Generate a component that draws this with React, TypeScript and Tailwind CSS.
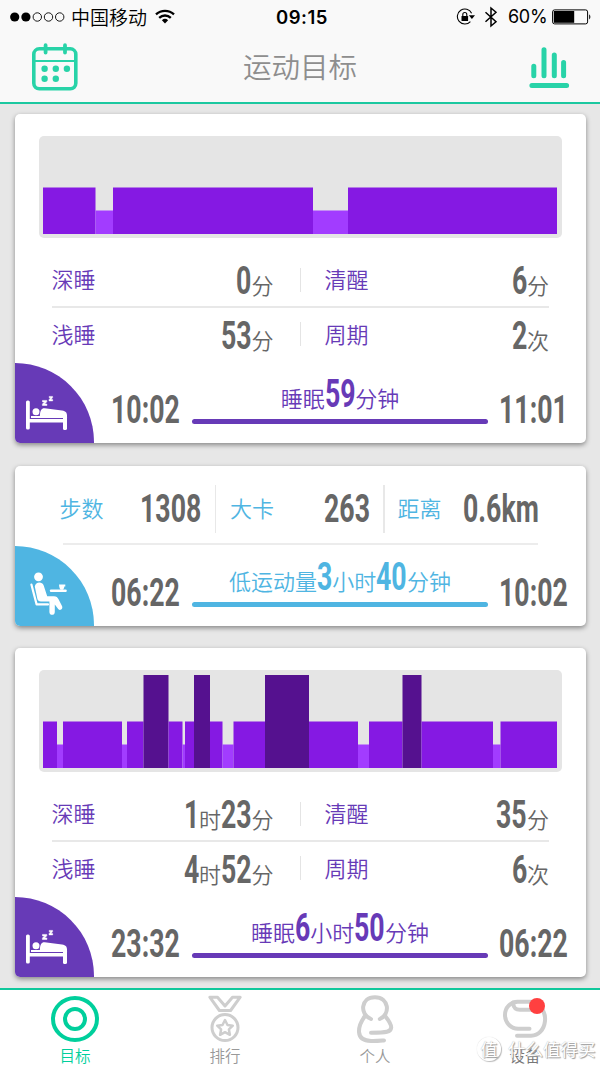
import type { ReactNode } from 'react';

type Level = 'light' | 'mid' | 'deep';
type Segment = [end: number, level: Level];

const LEVELS: Record<Level, { h: number; fill: string }> = {
  light: { h: 23.5, fill: '#a23cff' },
  mid: { h: 46.5, fill: '#8519e3' },
  deep: { h: 93, fill: '#55118f' },
};

const NAP: Segment[] = [[52.5, 'mid'], [70, 'light'], [270, 'mid'], [305, 'light'], [514, 'mid']];

const NIGHT: Segment[] = [
  [14, 'mid'], [20, 'light'], [79, 'mid'], [84, 'light'], [100.5, 'mid'], [125.5, 'deep'],
  [139.5, 'mid'], [142, 'light'], [151, 'mid'], [167, 'deep'], [179.5, 'mid'], [190.5, 'light'],
  [222, 'mid'], [266, 'deep'], [315, 'mid'], [326, 'light'], [359.5, 'mid'], [378.5, 'deep'],
  [450, 'mid'], [457.5, 'light'], [514, 'mid'],
];

const ADVANCE: Record<string, number> = { ':': 7.8, '.': 7.8, k: 14.5, m: 23.2 };

/* Condensed numerals: the glyphs are squeezed and the box takes the squeezed width. */
function Num({ children }: { children: string }) {
  const width = [...children].reduce((sum, c) => sum + (ADVANCE[c] ?? 15.3), 0);
  return (
    <span className="inline-block whitespace-nowrap" style={{ width }}>
      <span className="inline-block origin-left scale-x-[0.685] font-[Roboto,sans-serif] text-[39px] leading-[40px] font-bold">
        {children}
      </span>
    </span>
  );
}

function SleepChart({ segments }: { segments: Segment[] }) {
  return (
    <div className="mx-6 h-[102px] rounded-[5px] bg-[#e5e5e5] pt-[5px] pl-[4.5px]">
      <svg width="514" height="93" viewBox="0 0 514 93" className="block">
        {segments.map(([end, level], i) => {
          const start = i === 0 ? 0 : segments[i - 1][0];
          const { h, fill } = LEVELS[level];
          return <rect key={end} x={start} y={93 - h} width={end - start} height={h} fill={fill} />;
        })}
      </svg>
    </div>
  );
}

function Metric({ label, children }: { label: string; children: ReactNode }) {
  return (
    <div className="flex flex-1 items-center justify-between">
      <span className="pb-[3px] text-[22px] leading-[24px] font-[350] text-[#673ab7]">{label}</span>
      <span className="flex items-baseline pt-[3px] text-[22px] leading-[24px] font-[350] text-[#666]">{children}</span>
    </div>
  );
}

function MetricRow({ left, right }: { left: ReactNode; right: ReactNode }) {
  return (
    <div className="flex h-[53px] items-center">
      <div className="flex w-[222px]">{left}</div>
      <div className="mr-[24px] ml-[26px] h-6 w-px bg-[#e4e4e4]" />
      <div className="flex flex-1">{right}</div>
    </div>
  );
}

function BedIcon() {
  return (
    <svg width="42" height="36" viewBox="0 0 42 36" fill="#fff" className="block">
      <rect x="0" y="5.5" width="3.8" height="29" rx="1.6" />
      <rect x="2" y="24" width="39" height="3.6" rx="1" />
      <rect x="37" y="21" width="4" height="14" rx="1.6" />
      <path d="M5 21H41V23H5Z" />
      <circle cx="10" cy="16.7" r="3.5" />
      <path d="M13.8 20.5C14.2 15 15.6 13 18.6 13.2L36 15.4C40 16 41 17.6 41 21H14Z" />
      <path
        d="M16.5 5.4H20.8V6.8L18.7 9H20.9V10.5H16.4V9.1L18.5 6.9H16.5ZM23.2 1.4H26.6V2.6L25 4.6H26.7V5.9H23V4.7L24.7 2.7H23.2Z"
        stroke="#fff"
        strokeWidth="0.5"
      />
    </svg>
  );
}

function SittingIcon() {
  return (
    <svg width="38" height="44" viewBox="0 0 38 44" fill="#fff" className="block">
      <circle cx="8.5" cy="4.8" r="4.4" />
      <path d="M4.8 14.5C5.5 9.8 12 9.2 13.7 13.5L17.2 24.2H24C26.4 24.2 27.6 25.5 28.4 27L32 34C33.4 37 30 39.2 28.2 37L24.8 32.5V40C24.8 43.8 19.4 43.8 19.4 40V29.5H11C8.8 29.5 7.8 28.4 7.4 27Z" />
      <path d="M1.4 12.5L6.6 32.4H18" fill="none" stroke="#fff" strokeWidth="2.2" strokeLinecap="round" strokeLinejoin="round" />
      <rect x="19.8" y="17.6" width="17" height="2.4" rx="1.2" />
      <path d="M29 12.6H35.3V14.6H34.3C34.2 16 33.8 17 33 17.8H30.6C29.5 16.5 29.2 15 29 12.6Z" />
    </svg>
  );
}

type TimelineProps = {
  start: string;
  end: string;
  icon: ReactNode;
  iconPad: string;
  badge: string;
  text: string;
  bar: string;
  children: ReactNode;
};

function Timeline({ start, end, icon, iconPad, badge, text, bar, children }: TimelineProps) {
  return (
    <div className="flex h-[80px] text-[#666]">
      <div className={`h-[80px] w-[79.5px] shrink-0 overflow-hidden rounded-tr-full rounded-bl-[4px] ${iconPad} ${badge}`}>{icon}</div>
      <div className="w-[98px] pt-[27px] pl-[17px]"><Num>{start}</Num></div>
      <div className="w-[296px]">
        <div className={`flex h-[56px] items-baseline justify-center pt-[11px] text-[22px] leading-[24px] font-[350] ${text}`}>{children}</div>
        <div className={`h-[5px] rounded-full ${bar}`} />
      </div>
      <div className="pt-[27px] pl-[10.5px]"><Num>{end}</Num></div>
    </div>
  );
}

function Card({ children }: { children: ReactNode }) {
  return (
    <section className="flex flex-col overflow-hidden rounded-[5px] bg-white shadow-[0_2px_5px_rgba(0,0,0,0.42)]">
      {children}
    </section>
  );
}

type SleepCardProps = {
  segments: Segment[];
  deep: ReactNode;
  awake: ReactNode;
  light: ReactNode;
  cycles: ReactNode;
  start: string;
  end: string;
  total: ReactNode;
};

function SleepCard({ segments, deep, awake, light, cycles, start, end, total }: SleepCardProps) {
  return (
    <Card>
      <div className="h-[249px] pt-[22px]">
        <SleepChart segments={segments} />
        <div className="mx-[37px] pt-[15px]">
          <MetricRow left={<Metric label="深睡">{deep}</Metric>} right={<Metric label="清醒">{awake}</Metric>} />
          <div className="h-[1.5px] bg-[#e8e8e8]" />
          <MetricRow left={<Metric label="浅睡">{light}</Metric>} right={<Metric label="周期">{cycles}</Metric>} />
        </div>
      </div>
      <Timeline
        start={start}
        end={end}
        icon={<BedIcon />}
        iconPad="pt-[32px] pl-[11.5px]"
        badge="bg-[#673ab7]"
        text="text-[#673ab7]"
        bar="bg-[#673ab7]"
      >
        {total}
      </Timeline>
    </Card>
  );
}

function StatusBar() {
  return (
    <div className="flex h-[33px] items-center text-[18px] leading-8 text-black">
      <svg width="56" height="12" viewBox="0 0 56 12" className="ml-[9px]">
        <circle cx="5.7" cy="6" r="4.6" />
        <circle cx="16.9" cy="6" r="4.6" />
        <g fill="none" stroke="#000" strokeWidth="0.9">
          <circle cx="28.3" cy="6" r="4.2" />
          <circle cx="39.5" cy="6" r="4.2" />
          <circle cx="50.7" cy="6" r="4.2" />
        </g>
      </svg>
      <span className="ml-[6px] w-[76px] text-[19px] font-[350]">中国移动</span>
      <svg width="20" height="15" viewBox="0 0 20 15" className="ml-[8px]" fill="none" stroke="#000" strokeWidth="2.3">
        <path d="M1 5.4A13 13 0 0 1 19 5.4" />
        <path d="M4.2 8.8A8.4 8.4 0 0 1 15.8 8.8" />
        <path d="M6.9 11.2A4.6 4.6 0 0 1 13.1 11.2L10 14.5Z" fill="#000" stroke="none" />
      </svg>
      <span className="ml-[101px] w-[54px] pt-px font-[Inter,sans-serif] text-[18.5px] font-semibold tracking-[0.5px]">09:15</span>
      <svg width="20" height="18" viewBox="0 0 20 18" className="ml-[126px]">
        <path d="M15.6 5.2A7.5 7.5 0 1 0 14.4 13.6" fill="none" stroke="#000" strokeWidth="1.1" />
        <path d="M12.8 7.2H19L15.9 11Z" />
        <rect x="5.5" y="8" width="6.6" height="5" rx="0.5" />
        <path d="M6.8 8V6.5A2 2 0 0 1 10.8 6.5V8" fill="none" stroke="#000" strokeWidth="1.1" />
      </svg>
      <svg width="14" height="22" viewBox="0 0 14 22" className="ml-[8px]" fill="none" stroke="#000" strokeWidth="1.5">
        <path d="M1.5 6.2L12 15.8L7 20V2L12 6.2L1.5 15.8" />
      </svg>
      <span className="ml-[10px] w-[40px] pt-px font-[Inter,sans-serif] text-[18px] tracking-[-0.3px]">60%</span>
      <svg width="40" height="16" viewBox="0 0 40 16" className="ml-[4px]">
        <rect x="0.6" y="0.9" width="35" height="14" rx="2" fill="none" stroke="#000" strokeWidth="1" />
        <rect x="1.8" y="2" width="20.4" height="11.8" />
        <path d="M37.2 5.2Q39.6 7.9 37.2 10.6Z" />
      </svg>
    </div>
  );
}

function Header() {
  return (
    <header className="h-[104px] border-b-2 border-[#1cc8a0] bg-[#f9f9f9]">
      <StatusBar />
      <div className="flex h-[69px] items-start justify-between pr-[29px] pl-[31px]">
        <svg width="48" height="50" viewBox="0 0 48 50" className="mt-[9px]" fill="none" stroke="#28d3a8" strokeLinecap="round">
          <rect x="2.8" y="6.8" width="42" height="40" rx="5.5" strokeWidth="3.6" />
          <path d="M3 19H45" strokeWidth="2.2" />
          <path d="M14.6 3.2V10.6M34 3.2V10.6" strokeWidth="3.8" />
          <g fill="#28d3a8" stroke="none">
            <circle cx="13.6" cy="26.7" r="3.2" />
            <circle cx="24.8" cy="26.7" r="3.2" />
            <circle cx="35.9" cy="26.7" r="3.2" />
            <circle cx="13.6" cy="36.8" r="3.2" />
            <circle cx="24.8" cy="36.8" r="3.2" />
          </g>
        </svg>
        <h1 className="mt-[13px] -ml-2 text-[28.5px] leading-[40px] font-[350] text-[#8e8e8e]">运动目标</h1>
        <svg width="42" height="44" viewBox="0 0 42 44" className="mt-[13px]" fill="none" stroke="#28d3a8" strokeWidth="5" strokeLinecap="round">
          <path d="M4.8 20.3V29.8M15 3.8V29.8M25.3 9V29.8M34.6 16.5V29.8M2.9 39.6H37.6" />
        </svg>
      </div>
    </header>
  );
}

function Stat({ label, value, className }: { label: string; value: string; className: string }) {
  return (
    <div className={`flex items-center justify-between ${className}`}>
      <span className="pb-[4px] text-[22px] leading-[24px] font-[350] text-[#4fb5e2]">{label}</span>
      <span className="text-[#666]"><Num>{value}</Num></span>
    </div>
  );
}

function ActivityCard() {
  return (
    <Card>
      <div className="h-[80px] pt-[19px]">
        <div className="flex h-[48px] pl-[45px]">
          <Stat label="步数" value="1308" className="w-[142px]" />
          <div className="ml-[13px] w-[1.5px] bg-[#e8e8e8]" />
          <Stat label="大卡" value="263" className="ml-[14px] w-[140px]" />
          <div className="ml-[13px] w-[1.5px] bg-[#e8e8e8]" />
          <Stat label="距离" value="0.6km" className="ml-[13px] w-[142px]" />
        </div>
        <div className="mx-[48px] mt-[10.5px] h-[2px] bg-[#ececec]" />
      </div>
      <Timeline
        start="06:22"
        end="10:02"
        icon={<SittingIcon />}
        iconPad="pt-[26px] pl-[15px]"
        badge="bg-[#4fb5e2]"
        text="text-[#4fb5e2]"
        bar="bg-[#4fb5e2]"
      >
        低运动量<Num>3</Num>小时<Num>40</Num>分钟
      </Timeline>
    </Card>
  );
}

function Tab({ label, color, children }: { label: string; color: string; children: ReactNode }) {
  return (
    <div className={`flex w-[150px] flex-col items-center pt-[3px] ${color}`}>
      <div className="flex h-[52px] items-center">{children}</div>
      <span className="text-[15.5px] leading-[20px] font-[350]">{label}</span>
    </div>
  );
}

function TabBar() {
  return (
    <nav className="flex h-[79px] border-t-2 border-[#10c89c] bg-white">
      <Tab label="目标" color="text-[#00cf9c]">
        <svg width="50" height="50" viewBox="0 0 50 50" fill="none" stroke="#00cf9c" strokeWidth="4">
          <ellipse cx="25" cy="25" rx="22" ry="21" />
          <circle cx="25" cy="25" r="10" />
        </svg>
      </Tab>
      <Tab label="排行" color="text-[#999]">
        <svg width="36" height="50" viewBox="0 0 36 50" fill="none" stroke="#cecece" strokeWidth="3" strokeLinejoin="round">
          <path d="M2.8 3.2H10.5L18 12L25.5 3.2H33.2L23.6 16.5H12.4Z" />
          <circle cx="18" cy="33.6" r="13" />
          <path d="M18 26L20.5 31L25.8 31.7L21.9 35.4L22.9 40.8L18 38.2L13.1 40.8L14.1 35.4L10.2 31.7L15.5 31Z" strokeWidth="2.5" />
        </svg>
      </Tab>
      <Tab label="个人" color="text-[#999]">
        <svg width="38" height="50" viewBox="0 0 38 50" fill="none" stroke="#cecece" strokeWidth="4" strokeLinecap="round">
          <path d="M15 25C3.4 20.5 4.5 3.2 18.9 3.2C33.3 3.2 34.6 20.5 23.8 25" />
          <path d="M9 22C3.8 29 2.8 34 3 38C3.5 44.5 9 46.8 15 47C20 47.2 23.5 46.8 28 46.4" />
          <path d="M29.5 22.5C33.5 27.5 35.3 30.5 35.2 33.5C34.8 38 31 38.7 15 38.7" />
        </svg>
      </Tab>
      <Tab label="设备" color="text-[#777]">
        <div className="relative">
          <svg width="46" height="50" viewBox="0 0 46 50" fill="none" stroke="#cecece" strokeWidth="4" strokeLinecap="round">
            <path d="M27.5 34.8H16C8 34.3 3 28 3 21C3 13.5 8.5 8 15.5 7.8H34" />
            <path d="M11 8.5C11.5 13.5 13 15.8 18 15.8H36" />
            <path d="M38.5 13.5C42.5 17.5 43.4 22.5 43 27C42 36 36.5 41.5 29 41.7H15" />
          </svg>
          <span className="absolute top-[3.5px] left-[27px] h-4 w-4 rounded-full bg-[#ff4040]" />
        </div>
      </Tab>
    </nav>
  );
}

function Watermark() {
  return (
    <div className="absolute top-[1036px] left-[477px] flex items-center whitespace-nowrap text-white [text-shadow:1px_1px_1px_#999,0_0_1px_#aaa]">
      <span className="flex h-[24px] w-[24px] items-center justify-center rounded-full border border-white text-[17px] leading-[22px] shadow-[1px_1px_1px_#bbb,0_0_1px_#ccc]">
        值
      </span>
      <span className="ml-[7px] text-[17.5px] leading-[26px]">什么值得买</span>
    </div>
  );
}

export default function App() {
  return (
    <div className="relative flex h-[1067px] w-[600px] flex-col overflow-hidden bg-[#e7e7e7] font-['Noto_Sans_CJK_SC',sans-serif]">
      <Header />
      <main className="flex h-[884px] flex-col gap-[22.5px] pt-[10px] pr-[14px] pl-[14.5px]">
        <SleepCard
          segments={NAP}
          deep={<><Num>0</Num>分</>}
          awake={<><Num>6</Num>分</>}
          light={<><Num>53</Num>分</>}
          cycles={<><Num>2</Num>次</>}
          start="10:02"
          end="11:01"
          total={<>睡眠<Num>59</Num>分钟</>}
        />
        <ActivityCard />
        <SleepCard
          segments={NIGHT}
          deep={<><Num>1</Num>时<Num>23</Num>分</>}
          awake={<><Num>35</Num>分</>}
          light={<><Num>4</Num>时<Num>52</Num>分</>}
          cycles={<><Num>6</Num>次</>}
          start="23:32"
          end="06:22"
          total={<>睡眠<Num>6</Num>小时<Num>50</Num>分钟</>}
        />
      </main>
      <TabBar />
      <Watermark />
    </div>
  );
}
